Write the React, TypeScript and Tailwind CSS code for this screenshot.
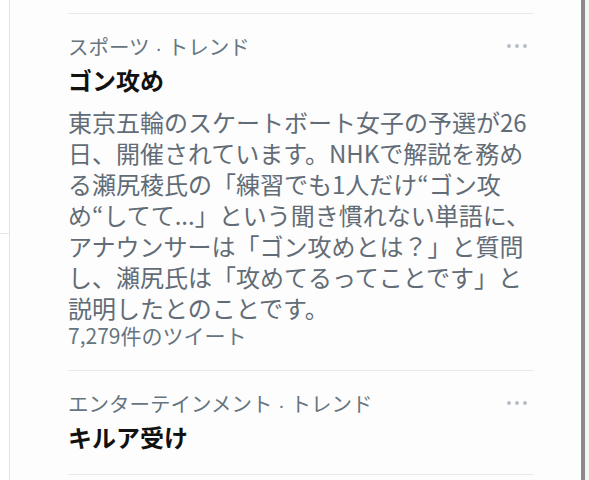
import React from 'react';

const bodyLines = [
  '東京五輪のスケートボート女子の予選が26',
  '日、開催されています。NHKで解説を務め',
  'る瀬尻稜氏の「練習でも1人だけ“ゴン攻',
  'め“してて...」という聞き慣れない単語に、',
  'アナウンサーは「ゴン攻めとは？」と質問',
  'し、瀬尻氏は「攻めてるってことです」と',
  '説明したとのことです。',
];

const MoreDots: React.FC = () => (
  <div className="flex items-center gap-[4px] mr-[6px]">
    <span className="w-[4px] h-[4px] rounded-full bg-[#b8bfc6]" />
    <span className="w-[4px] h-[4px] rounded-full bg-[#b8bfc6]" />
    <span className="w-[4px] h-[4px] rounded-full bg-[#b8bfc6]" />
  </div>
);

const TrendHeader: React.FC<{ category: string; title: string }> = ({ category, title }) => (
  <>
    <div className="h-[28px] flex items-center justify-between">
      <span className="text-[20.5px] leading-[28px] text-[#66757f]">
        {category}
        <span className="font-['Liberation_Sans',sans-serif] leading-[20px]"> · </span>
        トレンド
      </span>
      <MoreDots />
    </div>
    <div className="mt-[5px] text-[24px] leading-[30px] font-bold text-[#111]">{title}</div>
  </>
);

const App: React.FC = () => (
  <div className="w-[589px] h-[480px] flex overflow-hidden bg-white font-['Noto_Sans_CJK_JP',sans-serif]">
    {/* left column edge */}
    <div className="w-[9px] flex flex-col">
      <div className="h-[233px]" />
      <div className="h-px bg-[#e3e3e3]" />
    </div>
    <div className="w-px bg-[#e3e3e3]" />

    {/* trends panel */}
    <div className="flex-1 bg-[#fdfdfd] pl-[58px] pr-[48px] pt-[13px]">
      <section className="border-t border-[#e6e9ec] pt-[18px] pb-[23px]">
        <TrendHeader category="スポーツ" title="ゴン攻め" />
        <p className="mt-[11px] text-[24px] leading-[31px] text-[#626c76] whitespace-nowrap">
          {bodyLines.map((line, i) => (
            <React.Fragment key={i}>
              {line}
              {i < bodyLines.length - 1 && <br />}
            </React.Fragment>
          ))}
        </p>
        <div className="text-[21px] leading-[24px] text-[#66757f]">7,279件のツイート</div>
      </section>
      <section className="border-t border-b border-[#e6e9ec] pt-[18px] pb-[22px]">
        <TrendHeader category="エンターテインメント" title="キルア受け" />
      </section>
    </div>

    {/* scrollbar edge */}
    <div className="w-[4px] bg-[#8a8a8a]" />
    <div className="w-[4px] bg-[#f4f4f4]" />
  </div>
);

export default App;
